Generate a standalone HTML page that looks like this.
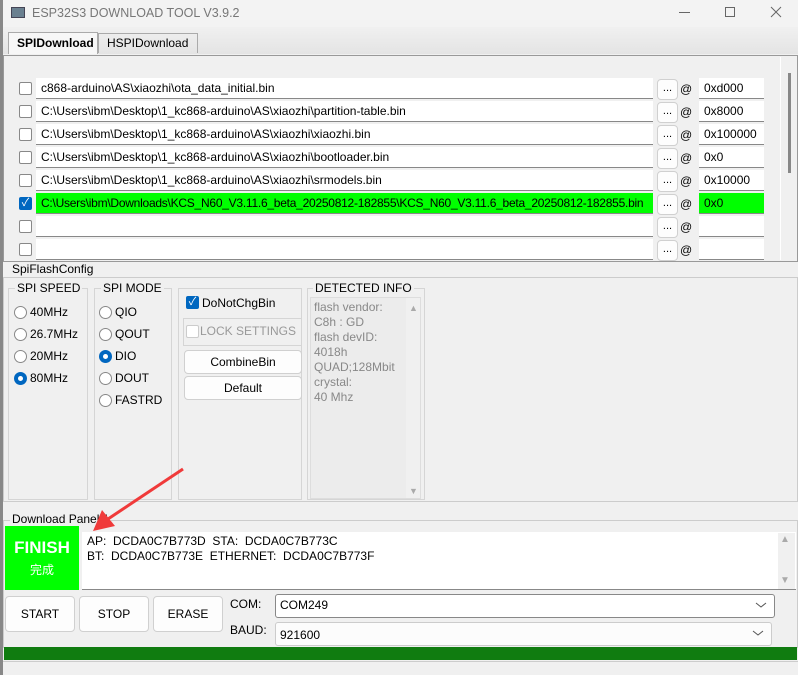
<!DOCTYPE html>
<html><head><meta charset="utf-8"><style>
*{box-sizing:border-box;margin:0;padding:0}
body{width:798px;height:675px;overflow:hidden;background:#f0f0f0;font-family:"Liberation Sans","Noto Sans CJK SC",sans-serif;font-size:12px;color:#000;position:relative}
.a{position:absolute}
.inp{position:absolute;background:#fff;border-bottom:1px solid #888;height:21px;padding:3px 5px;white-space:nowrap;overflow:hidden}
.cb{position:absolute;width:13px;height:13px;border:1px solid #888;background:#fff;border-radius:2px}
.btn{position:absolute;background:#fdfdfd;border:1px solid #d0d0d0;border-radius:4px;text-align:center}
.grp{position:absolute;border:1px solid #d5d5d5}
.lbl{position:absolute;background:#f0f0f0;padding:0 2px}
.rad{position:absolute;width:13px;height:13px;border:1px solid #888;border-radius:50%;background:#fff}
.rad.on{background:#0067c0;border-color:#0067c0}
.rad.on::after{content:"";position:absolute;left:3px;top:3px;width:5px;height:5px;border-radius:50%;background:#fff}
</style></head><body>
<div class="a" style="left:0;top:0;width:798px;height:27px;background:#f3f3f3"></div>
<div class="a" style="left:11px;top:7px;width:14px;height:11px;background:#6a8090;border:1px solid #445"></div>
<div class="a" style="left:32px;top:6px;color:#777;font-size:12.5px">ESP32S3 DOWNLOAD TOOL V3.9.2</div>
<div class="a" style="left:679px;top:12px;width:11px;height:1px;background:#666"></div>
<div class="a" style="left:725px;top:7px;width:10px;height:10px;border:1px solid #666"></div>
<svg class="a" style="left:770px;top:6px" width="12" height="12"><path d="M1 1L11 11M11 1L1 11" stroke="#666" stroke-width="1"/></svg>
<div class="a" style="left:0;top:28px;width:798px;height:26px;background:linear-gradient(#f0f0f0,#e4e4e4)"></div>
<div class="a" style="left:8px;top:32px;width:90px;height:22px;background:#f7f7f7;border:1px solid #aaa;border-bottom:none;font-weight:bold;padding:3px 8px">SPIDownload</div>
<div class="a" style="left:98px;top:33px;width:100px;height:20px;border:1px solid #aaa;border-bottom:none;padding:2px 8px">HSPIDownload</div>
<div class="a" style="left:3px;top:55px;width:795px;height:207px;border:1px solid #999;background:#f0f0f0"></div>
<div class="a" style="left:788px;top:73px;width:3px;height:100px;background:#888"></div>
<div class="a" style="left:780px;top:57px;width:1px;height:203px;background:#fff"></div>
<div id="rows"></div>
<script>
var r=[["c868-arduino\\AS\\xiaozhi\\ota_data_initial.bin","0xd000"],
["C:\\Users\\ibm\\Desktop\\1_kc868-arduino\\AS\\xiaozhi\\partition-table.bin","0x8000"],
["C:\\Users\\ibm\\Desktop\\1_kc868-arduino\\AS\\xiaozhi\\xiaozhi.bin","0x100000"],
["C:\\Users\\ibm\\Desktop\\1_kc868-arduino\\AS\\xiaozhi\\bootloader.bin","0x0"],
["C:\\Users\\ibm\\Desktop\\1_kc868-arduino\\AS\\xiaozhi\\srmodels.bin","0x10000"],
["C:\\Users\\ibm\\Downloads\\KCS_N60_V3.11.6_beta_20250812-182855\\KCS_N60_V3.11.6_beta_20250812-182855.bin","0x0"],["",""],["",""]];
var h="";
for(var i=0;i<8;i++){var y=78+i*23;var g=i==5?"background:#00ff00;letter-spacing:-0.25px;":"";
h+='<div class="cb" style="left:19px;top:'+(y+4)+'px;'+(i==5?'background:#0067c0;border-color:#0067c0;color:#fff;font-size:11px;line-height:11px;text-align:center':'')+'">'+(i==5?'✓':'')+'</div>';
h+='<div class="inp" style="left:36px;top:'+y+'px;width:617px;'+g+'">'+r[i][0]+'</div>';
h+='<div class="btn" style="left:657px;top:'+(y+1)+'px;width:21px;height:21px;font-size:11px;line-height:16px">...</div>';
h+='<div class="a" style="left:680px;top:'+(y+4)+'px">@</div>';
h+='<div class="inp" style="left:699px;top:'+y+'px;width:65px;'+(i==5?'background:#00ff00;':'')+'">'+r[i][1]+'</div>';}
document.getElementById("rows").innerHTML=h;
</script>
<div class="a" style="left:12px;top:262px">SpiFlashConfig</div>
<div class="grp" style="left:3px;top:277px;width:795px;height:225px;border-color:#ccc"></div>
<div class="grp" style="left:8px;top:288px;width:80px;height:212px"></div><div class="lbl" style="left:15px;top:281px">SPI SPEED</div>
<div class="grp" style="left:94px;top:288px;width:78px;height:212px"></div><div class="lbl" style="left:101px;top:281px">SPI MODE</div>
<div class="grp" style="left:178px;top:288px;width:124px;height:212px"></div>
<div class="grp" style="left:307px;top:288px;width:118px;height:212px"></div><div class="lbl" style="left:313px;top:281px">DETECTED INFO</div>
<div class="a" style="left:310px;top:297px;width:111px;height:202px;background:#ececec;border:1px solid #ddd"></div>
<div class="a" style="left:406px;top:298px;width:14px;height:200px;background:#f0f0f0"></div>
<div class="a" style="left:409px;top:303px;color:#aaa;font-size:9px">▲</div>
<div class="a" style="left:409px;top:486px;color:#aaa;font-size:9px">▼</div>
<div class="a" style="left:314px;top:300px;color:#888;line-height:15px;font-size:12px">flash vendor:<br>C8h : GD<br>flash devID:<br>4018h<br>QUAD;128Mbit<br>crystal:<br>40 Mhz</div>
<div class="rad" style="left:14px;top:306px"></div><div class="a" style="left:30px;top:305px">40MHz</div>
<div class="rad" style="left:14px;top:328px"></div><div class="a" style="left:30px;top:327px">26.7MHz</div>
<div class="rad" style="left:14px;top:350px"></div><div class="a" style="left:30px;top:349px">20MHz</div>
<div class="rad on" style="left:14px;top:372px"></div><div class="a" style="left:30px;top:371px">80MHz</div>
<div class="rad" style="left:99px;top:306px"></div><div class="a" style="left:115px;top:305px">QIO</div>
<div class="rad" style="left:99px;top:328px"></div><div class="a" style="left:115px;top:327px">QOUT</div>
<div class="rad on" style="left:99px;top:350px"></div><div class="a" style="left:115px;top:349px">DIO</div>
<div class="rad" style="left:99px;top:372px"></div><div class="a" style="left:115px;top:371px">DOUT</div>
<div class="rad" style="left:99px;top:394px"></div><div class="a" style="left:115px;top:393px">FASTRD</div>
<div class="cb" style="left:186px;top:296px;background:#0067c0;border-color:#0067c0;color:#fff;font-size:11px;line-height:11px;text-align:center">✓</div>
<div class="a" style="left:202px;top:296px">DoNotChgBin</div>
<div class="grp" style="left:183px;top:318px;width:119px;height:28px"></div>
<div class="cb" style="left:186px;top:325px;border-color:#ccc"></div>
<div class="a" style="left:200px;top:324px;color:#999">LOCK SETTINGS</div>
<div class="btn" style="left:184px;top:350px;width:118px;height:24px;line-height:22px">CombineBin</div>
<div class="btn" style="left:184px;top:376px;width:118px;height:24px;line-height:22px">Default</div>
<div class="grp" style="left:3px;top:520px;width:795px;height:128px;border-color:#ccc"></div>
<div class="lbl" style="left:10px;top:512px">Download Panel 1</div>
<div class="a" style="left:5px;top:526px;width:74px;height:64px;background:#00ff00;color:#fff;text-align:center"><div style="font-size:17px;font-weight:bold;margin-top:12px">FINISH</div><div style="font-size:12px;margin-top:3px">完成</div></div>
<div class="a" style="left:82px;top:532px;width:714px;height:58px;background:#fff;border-bottom:1px solid #888;padding:2px 5px;line-height:15px">AP:&nbsp; DCDA0C7B773D&nbsp; STA:&nbsp; DCDA0C7B773C<br>BT:&nbsp; DCDA0C7B773E&nbsp; ETHERNET:&nbsp; DCDA0C7B773F</div>
<div class="a" style="left:778px;top:533px;width:17px;height:56px;background:#f0f0f0"></div>
<div class="a" style="left:780px;top:534px;color:#aaa;font-size:10px">▲</div>
<div class="a" style="left:780px;top:575px;color:#aaa;font-size:10px">▼</div>
<div class="btn" style="left:5px;top:596px;width:70px;height:36px;line-height:34px">START</div>
<div class="btn" style="left:79px;top:596px;width:70px;height:36px;line-height:34px">STOP</div>
<div class="btn" style="left:153px;top:596px;width:70px;height:36px;line-height:34px">ERASE</div>
<div class="a" style="left:230px;top:597px">COM:</div>
<div class="a" style="left:230px;top:623px">BAUD:</div>
<div class="a" style="left:275px;top:594px;width:500px;height:24px;background:#fff;border:1px solid #888;border-radius:3px;padding:3px 4px">COM249</div>
<div class="a" style="left:275px;top:622px;width:497px;height:24px;background:#fcfcfc;border:1px solid #ccc;border-radius:3px;padding:5px 4px">921600</div>
<svg class="a" style="left:755px;top:601px" width="12" height="8"><path d="M1 2 L6 6 L11 2" fill="none" stroke="#555"/></svg>
<svg class="a" style="left:752px;top:629px" width="12" height="8"><path d="M1 2 L6 6 L11 2" fill="none" stroke="#555"/></svg>
<div class="a" style="left:4px;top:647px;width:793px;height:13px;background:#107c10"></div>
<div class="a" style="left:0;top:661px;width:798px;height:1px;background:#ccc"></div>
<div class="a" style="left:0;top:0;width:3px;height:675px;background:#888"></div>
<svg class="a" style="left:0;top:0" width="798" height="675"><path d="M183 469 L108 519" stroke="#f03a3a" stroke-width="3"/><path d="M93 531 L102 510 L115 526 Z" fill="#f03a3a"/></svg>
</body></html>
